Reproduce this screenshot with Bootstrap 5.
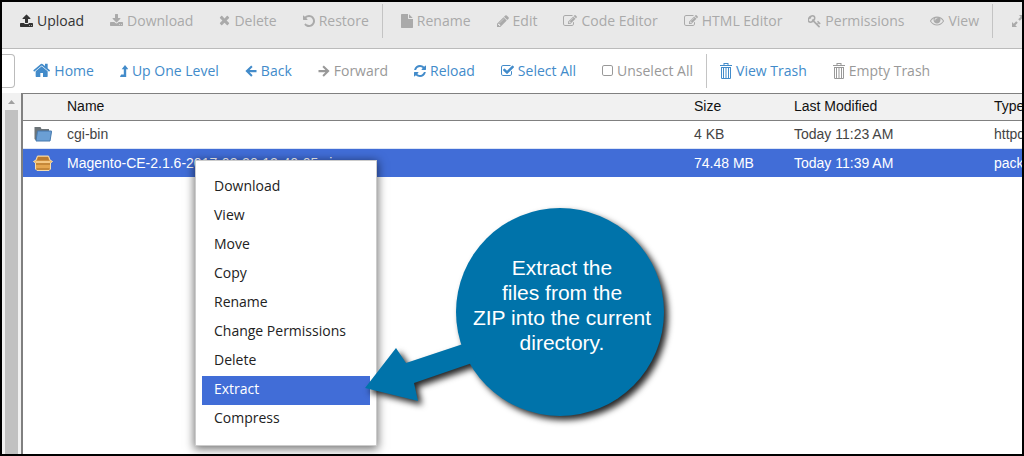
<!DOCTYPE html>
<html lang="en">
<head>
<meta charset="utf-8">
<meta name="viewport" content="width=device-width, initial-scale=1">
<title>File Manager</title>
<link href="https://cdn.jsdelivr.net/npm/bootstrap@5.3.0/dist/css/bootstrap.min.css" rel="stylesheet">
<style>
  body { font-family: "Open Sans", sans-serif; font-size: 14px; line-height: 20px; background: #fff; color: #333; }
  .fm-frame { border: 2px solid #000; }
  .fm-bar { padding: 2px 0 10px 5px; background: #e9e9e9; border-bottom: 1px solid #bbb; }
  .fm-nav { padding: 5px 0; }
  .fm-btn { display: flex; align-items: center; gap: 4px; flex: none; height: 34px; padding: 0 13px;
            border: 0; background: none; color: #428bca; font-size: 14px; white-space: nowrap; }
  .fm-btn:disabled { color: #999; }
  .fm-bar .fm-btn { color: #333; }
  .fm-bar .fm-btn:disabled { color: #aaa; }
  .fm-btn svg { height: 14px; flex: none; fill: currentColor; }
  .fm-btn svg.tall { height: 16px; }
  .fm-sep { flex: none; width: 1px; height: 34px; background: #c4c4c4; margin-right: 5px; }
  .fm-path { flex: none; width: 13px; height: 34px; padding: 0; margin-right: 5px; border: 1px solid #bbb; border-left: 0; border-radius: 0 4px 4px 0; }
  .fm-scroll { flex: none; width: 19px; padding: 0 3px; background: #f1f1f1; }
  .fm-scroll svg { height: 17px; width: 13px; fill: #a0a0a0; }
  .fm-thumb { background: #c1c1c1; }
  .fm-files { border-left: 2px solid #808080; border-top: 1px solid #808080; min-width: 0; }
  .fm-table { table-layout: fixed; width: 100%; border-collapse: separate; border-spacing: 0; font: 14px/20px "Liberation Sans", Arial, sans-serif; white-space: nowrap; }
  .fm-table th { background: #f1f1f1; border-bottom: 1px solid #808080; font-weight: 400; color: #111; height: 27px; padding: 2px 4px 4px; overflow: hidden; }
  .fm-table td { height: 28px; padding: 3px 4px 4px; color: #444; border-bottom: 1px solid #dce5f5; overflow: hidden; }
  .fm-table .picked td { background: #416dd7; color: #fff; border: 0; }
  .fm-table svg { display: block; margin: 0 auto; }
  .c-icon { width: 40px; } .c-size { width: 100px; } .c-date { width: 200px; } .c-type { width: 32px; }
  .fm-menu { position: absolute; left: 172px; top: 66px; width: 182px; padding: 12px 6px 11px; background: #fff;
             border: 1px solid #ccc; box-shadow: 0 2px 9px 1px rgba(0,0,0,.55); }
  .fm-menu button { display: block; width: 100%; height: 29px; padding: 0 12px 4px; border: 0; background: none; color: #222; text-align: left; }
  .fm-menu .chosen { background: #416dd7; color: #fff; }
  .fm-note { position: absolute; left: 336px; top: 107px; }
  .fm-note svg { display: block; overflow: visible; filter: drop-shadow(4px 4px 3px rgba(0,0,0,.85)); }
  .fm-note p { position: absolute; right: 0; top: 54px; width: 206px; margin: 0; text-align: center; color: #fff;
               font: 21px/25px "Liberation Sans", Arial, sans-serif; }
</style>
</head>
<body>
<div class="fm-frame d-flex flex-column vh-100 overflow-hidden">
  <div class="fm-bar d-flex align-items-center overflow-hidden flex-shrink-0" role="toolbar" aria-label="File actions">
    <button class="fm-btn" type="button"><svg viewBox="64 0 1664 1792"><path d="M1344 1472q0-26-19-45t-45-19-45 19-19 45 19 45 45 19 45-19 19-45zm256 0q0-26-19-45t-45-19-45 19-19 45 19 45 45 19 45-19 19-45zm128-224v320q0 40-28 68t-68 28h-1472q-40 0-68-28t-28-68v-320q0-40 28-68t68-28h427q21 56 70.500 92t110.500 36h256q61 0 110.500-36t70.500-92h427q40 0 68 28t28 68zm-325-648q-17 40-59 40h-256v448q0 26-19 45t-45 19h-256q-26 0-45-19t-19-45v-448h-256q-42 0-59-40-17-39 14-69l448-448q18-19 45-19t45 19l448 448q31 30 14 69z"/></svg>Upload</button>
    <button class="fm-btn" type="button" disabled><svg viewBox="64 0 1664 1792"><path d="M1344 1344q0-26-19-45t-45-19-45 19-19 45 19 45 45 19 45-19 19-45zm256 0q0-26-19-45t-45-19-45 19-19 45 19 45 45 19 45-19 19-45zm128-224v320q0 40-28 68t-68 28h-1472q-40 0-68-28t-28-68v-320q0-40 28-68t68-28h465l135 136q58 56 136 56t136-56l136-136h464q40 0 68 28t28 68zm-325-569q17 41-14 70l-448 448q-18 19-45 19t-45-19l-448-448q-31-29-14-70 17-39 59-39h256v-448q0-26 19-45t45-19h256q26 0 45 19t19 45v448h256q42 0 59 39z"/></svg>Download</button>
    <button class="fm-btn" type="button" disabled><svg viewBox="192 128 1408 1792"><path d="M1490 1322q0 40-28 68l-136 136q-28 28-68 28t-68-28l-294-294-294 294q-28 28-68 28t-68-28l-136-136q-28-28-28-68t28-68l294-294-294-294q-28-28-28-68t28-68l136-136q28-28 68-28t68 28l294 294 294-294q28-28 68-28t68 28l136 136q28 28 28 68t-28 68l-294 294 294 294q28 28 28 68z"/></svg>Delete</button>
    <button class="fm-btn" type="button" disabled><svg viewBox="128 0 1536 1792"><path d="M1664 896q0 156-61 298t-164 245-245 164-298 61q-172 0-327-72.500t-264-204.500q-7-10-6.500-22.500t8.500-20.500l137-138q10-9 25-9 16 2 23 12 73 95 179 147t225 52q104 0 198.500-40.500t163.500-109.500 109.500-163.500 40.500-198.500-40.500-198.500-109.500-163.500-163.500-109.500-198.500-40.500q-98 0-188 35.500t-160 101.500l137 138q31 30 14 69-17 40-59 40h-448q-26 0-45-19t-19-45v-448q0-42 40-59 39-17 69 14l130 129q107-101 244.500-156.500t284.500-55.500q156 0 298 61t245 164 164 245 61 298z"/></svg>Restore</button>
    <span class="fm-sep"></span>
    <button class="fm-btn" type="button" disabled><svg viewBox="128 0 1536 1792"><path d="M1152 512v-472q22 14 36 28l408 408q14 14 28 36h-472zm-128 32q0 40 28 68t68 28h544v1056q0 40-28 68t-68 28h-1344q-40 0-68-28t-28-68v-1600q0-40 28-68t68-28h800v544z"/></svg>Rename</button>
    <button class="fm-btn" type="button" disabled><svg viewBox="128 0 1536 1792"><path d="M491 1536l91-91-235-235-91 91v107h128v128h107zm523-928q0-22-22-22-10 0-17 7l-542 542q-7 7-7 17 0 22 22 22 10 0 17-7l542-542q7-7 7-17zm-54-192l416 416-832 832h-416v-416zm683 96q0 53-37 90l-166 166-416-416 166-165q36-38 90-38 53 0 91 38l235 234q37 39 37 91z"/></svg>Edit</button>
    <button class="fm-btn" type="button" disabled><svg viewBox="0 0 1792 1792"><path d="M888 1184l116-116-152-152-116 116v56h96v96h56zm440-720q-16-16-33 1l-350 350q-17 17-1 33t33-1l350-350q17-17 1-33zm80 594v190q0 119-84.500 203.500t-203.500 84.500h-832q-119 0-203.500-84.500t-84.500-203.500v-832q0-119 84.500-203.500t203.500-84.500h832q63 0 117 25 15 7 18 23 3 17-9 29l-49 49q-14 14-32 8-23-6-45-6h-832q-66 0-113 47t-47 113v832q0 66 47 113t113 47h832q66 0 113-47t47-113v-126q0-13 9-22l64-64q15-15 35-7t20 29zm-96-738l288 288-672 672h-288v-288zm444 132l-92 92-288-288 92-92q28-28 68-28t68 28l152 152q28 28 28 68t-28 68z"/></svg>Code Editor</button>
    <button class="fm-btn" type="button" disabled><svg viewBox="0 0 1792 1792"><path d="M888 1184l116-116-152-152-116 116v56h96v96h56zm440-720q-16-16-33 1l-350 350q-17 17-1 33t33-1l350-350q17-17 1-33zm80 594v190q0 119-84.500 203.500t-203.500 84.500h-832q-119 0-203.500-84.500t-84.500-203.500v-832q0-119 84.500-203.500t203.500-84.500h832q63 0 117 25 15 7 18 23 3 17-9 29l-49 49q-14 14-32 8-23-6-45-6h-832q-66 0-113 47t-47 113v832q0 66 47 113t113 47h832q66 0 113-47t47-113v-126q0-13 9-22l64-64q15-15 35-7t20 29zm-96-738l288 288-672 672h-288v-288zm444 132l-92 92-288-288 92-92q28-28 68-28t68 28l152 152q28 28 28 68t-28 68z"/></svg>HTML Editor</button>
    <button class="fm-btn" type="button" disabled><svg viewBox="64 0 1664 1792"><path d="M832 512q0-80-56-136t-136-56-136 56-56 136q0 42 19 83-41-19-83-19-80 0-136 56t-56 136 56 136 136 56 136-56 56-136q0-42-19-83 41 19 83 19 80 0 136-56t56-136zm851 704q0 17-49 66t-66 49q-9 0-28.500-16t-36.500-33-38.500-40-24.500-26l-96 96 220 220q28 28 28 68 0 42-39 81t-81 39q-40 0-68-28l-671-671q-176 131-365 131-163 0-265.500-102.500t-102.500-265.500q0-160 95-313t248-248 313-95q163 0 265.500 102.500t102.500 265.500q0 189-131 365l355 355 96-96q-3-3-26-24.500t-40-38.500-33-36.500-16-28.500q0-17 49-66t66-49q13 0 23 10 6 6 46 44.500t82 79.500 86.500 86 73 78 28.500 41z"/></svg>Permissions</button>
    <button class="fm-btn" type="button" disabled><svg viewBox="0 64 1792 1792"><path d="M1664 960q-152-236-381-353 61 104 61 225 0 185-131.500 316.500t-316.500 131.500-316.500-131.500-131.500-316.500q0-121 61-225-229 117-381 353 133 205 333.500 326.500t434.500 121.500 434.500-121.500 333.500-326.500zm-720-384q0-20-14-34t-34-14q-125 0-214.500 89.500t-89.500 214.500q0 20 14 34t34 14 34-14 14-34q0-86 61-147t147-61q20 0 34-14t14-34zm848 384q0 34-20 69-140 230-376.500 368.500t-499.500 138.500-499.500-139-376.500-368q-20-35-20-69t20-69q140-229 376.500-368t499.500-139 499.500 139 376.500 368q20 35 20 69z"/></svg>View</button>
    <span class="fm-sep"></span>
    <button class="fm-btn" type="button" disabled aria-label="Expand"><svg viewBox="0 0 14 14"><path d="M1 13V8l1.700 1.700L5.200 7.200l1.600 1.600-2.500 2.500L6 13zM13 1v5l-1.700-1.700-2.500 2.500-1.600-1.600 2.500-2.500L8 1z"/></svg></button>
  </div>

  <div class="fm-nav d-flex align-items-center overflow-hidden flex-shrink-0" role="toolbar" aria-label="Navigation">
    <input class="fm-path" type="text" aria-label="Path">
    <button class="fm-btn" type="button"><svg class="tall" viewBox="64 192 1664 1536"><path d="M1472 992v480q0 26-19 45t-45 19h-384v-384h-256v384h-384q-26 0-45-19t-19-45v-480q0-1 .5-3t.5-3l575-474 575 474q1 2 1 6zm223-69l-62 74q-8 9-21 11h-3q-13 0-21-7l-692-577-692 577q-12 8-24 7-13-2-21-11l-62-74q-8-10-7-23.500t11-21.500l719-599q32-26 76-26t76 26l244 204v-195q0-14 9-23t23-9h192q14 0 23 9t9 23v408l219 182q10 8 11 21.500t-7 23.500z"/></svg>Home</button>
    <button class="fm-btn" type="button"><svg viewBox="0 0 8 14"><path d="M5 1l3.300 4.200H6.200V13H.4L0 12.500l1.200-1.900h2.600V5.200H1.700z"/></svg>Up One Level</button>
    <button class="fm-btn" type="button"><svg viewBox="0 0 12 14"><path d="M6.200 1.500l1.400 1.400-3 3H11.500v2.400H4.600l3 3-1.400 1.400L.4 7.100z"/></svg>Back</button>
    <button class="fm-btn" type="button" disabled><svg viewBox="0 0 12 14"><path d="M5.800 1.500L4.400 2.900l3 3H.5v2.400h6.900l-3 3 1.400 1.400 5.800-5.600z"/></svg>Forward</button>
    <button class="fm-btn" type="button"><svg viewBox="128 0 1536 1792"><path d="M1639 1056q0 5-1 7-64 268-268 434.500t-478 166.500q-146 0-282.500-55t-243.500-157l-129 129q-19 19-45 19t-45-19-19-45v-448q0-26 19-45t45-19h448q26 0 45 19t19 45-19 45l-137 137q71 66 161 102t187 36q134 0 250-65t186-179q11-17 53-117 8-23 30-23h192q13 0 22.500 9.500t9.500 22.500zm25-800v448q0 26-19 45t-45 19h-448q-26 0-45-19t-19-45 19-45l138-138q-148-137-349-137-134 0-250 65t-186 179q-11 17-53 117-8 23-30 23h-199q-13 0-22.500-9.500t-9.500-22.500v-7q65-268 270-434.500t480-166.500q146 0 284 55.500t245 156.500l130-129q19-19 45-19t45 19 19 45z"/></svg>Reload</button>
    <button class="fm-btn" type="button"><svg viewBox="64 0 1664 1792"><path d="M1472 930v318q0 119-84.500 203.500t-203.500 84.500h-832q-119 0-203.500-84.500t-84.500-203.500v-832q0-119 84.500-203.500t203.500-84.500h832q63 0 117 25 15 7 18 23 3 17-9 29l-49 49q-10 10-23 10-3 0-9-2-23-6-45-6h-832q-66 0-113 47t-47 113v832q0 66 47 113t113 47h832q66 0 113-47t47-113v-254q0-13 9-22l64-64q10-10 23-10 6 0 12 3 20 8 20 29zm231-489l-814 814q-24 24-57 24t-57-24l-430-430q-24-24-24-57t24-57l110-110q24-24 57-24t57 24l263 263 647-647q24-24 57-24t57 24l110 110q24 24 24 57t-24 57z"/></svg>Select All</button>
    <button class="fm-btn" type="button" disabled><svg viewBox="192 0 1408 1792"><path d="M1312 256h-832q-66 0-113 47t-47 113v832q0 66 47 113t113 47h832q66 0 113-47t47-113v-832q0-66-47-113t-113-47zm288 160v832q0 119-84.500 203.500t-203.500 84.500h-832q-119 0-203.500-84.500t-84.500-203.500v-832q0-119 84.500-203.500t203.500-84.500h832q119 0 203.500 84.500t84.500 203.500z"/></svg>Unselect All</button>
    <span class="fm-sep me-0"></span>
    <button class="fm-btn" type="button"><svg class="tall" viewBox="0 0 12 16"><path fill-rule="evenodd" d="M3.500 2V0h5v2H12v1H0V2zm1 0h3V1h-3zM1 4h10v11l-.6 1H1.600L1 15zm1 1v10h1V5zm2 0v10h1.500V5zm2.500 0v10H8V5zM9 5v10h1V5z"/></svg>View Trash</button>
    <button class="fm-btn" type="button" disabled><svg class="tall" viewBox="0 0 12 16"><path fill-rule="evenodd" d="M3.500 2V0h5v2H12v1H0V2zm1 0h3V1h-3zM1 4h10v11l-.6 1H1.600L1 15zm1 1v10h1V5zm2 0v10h1.500V5zm2.500 0v10H8V5zM9 5v10h1V5z"/></svg>Empty Trash</button>
  </div>

  <div class="d-flex flex-grow-1">
    <div class="fm-scroll d-flex flex-column">
      <svg class="flex-shrink-0" viewBox="0 0 13 17"><path d="M3 11l3.500-4L10 11z"/></svg>
      <div class="fm-thumb flex-grow-1"></div>
    </div>
    <main class="fm-files position-relative flex-grow-1">
      <table class="fm-table">
        <thead>
          <tr><th class="c-icon" aria-label="Icon"></th><th>Name</th><th class="c-size">Size</th><th class="c-date">Last Modified</th><th class="c-type">Type</th></tr>
        </thead>
        <tbody>
          <tr>
            <td><svg width="18" height="16" viewBox="0 0 18 16"><path d="M.5 1h6l1 2H15v11H1.500L.5 13z" fill="#6b7378"/><path d="M3.500 5h14v.8L16 15H2z" fill="#6b9fd4" stroke="#4679ad"/></svg></td>
            <td>cgi-bin</td><td>4 KB</td><td>Today 11:23 AM</td><td>httpd/unix-directory</td>
          </tr>
          <tr class="picked">
            <td><svg width="20" height="16" viewBox="0 0 20 16"><path d="M4.500 1h11l1.500 4 2.500 1.500-2 1.500V14L16 15.500H4L2.500 14V8l-2-1.500L3 5z" fill="#e4a650" stroke="#f5dcae"/><path d="M5 2h10l1.200 3.500H3.800z" fill="#b87a30"/><path d="M2.500 6h15v2h-15z" fill="#f4c884"/><path d="M3 8.500h14v1H3zM3.500 13.500h13v1h-13z" fill="#a66a22"/></svg></td>
            <td>Magento-CE-2.1.6-2017-03-20-12-40-05.zip</td><td>74.48 MB</td><td>Today 11:39 AM</td><td>package/x-generic</td>
          </tr>
        </tbody>
      </table>

      <div class="fm-menu" role="menu">
        <button type="button" role="menuitem">Download</button>
        <button type="button" role="menuitem">View</button>
        <button type="button" role="menuitem">Move</button>
        <button type="button" role="menuitem">Copy</button>
        <button type="button" role="menuitem">Rename</button>
        <button type="button" role="menuitem">Change Permissions</button>
        <button type="button" role="menuitem">Delete</button>
        <button type="button" role="menuitem" class="chosen">Extract</button>
        <button type="button" role="menuitem">Compress</button>
      </div>

      <div class="fm-note">
        <!-- Speech bubble: disc plus an arrow pointing at the Extract entry -->
        <svg width="306" height="216" viewBox="0 0 306 216" fill="#0073aa"><circle cx="201" cy="111" r="104"/><path d="M6 187L37 147l10 15 60-20 12 18-64 22 4 18z"/></svg>
        <p>Extract the<br>files from the<br>ZIP into the current<br>directory.</p>
      </div>
    </main>
  </div>
</div>
<script src="https://cdn.jsdelivr.net/npm/bootstrap@5.3.0/dist/js/bootstrap.bundle.min.js"></script>
</body>
</html>
